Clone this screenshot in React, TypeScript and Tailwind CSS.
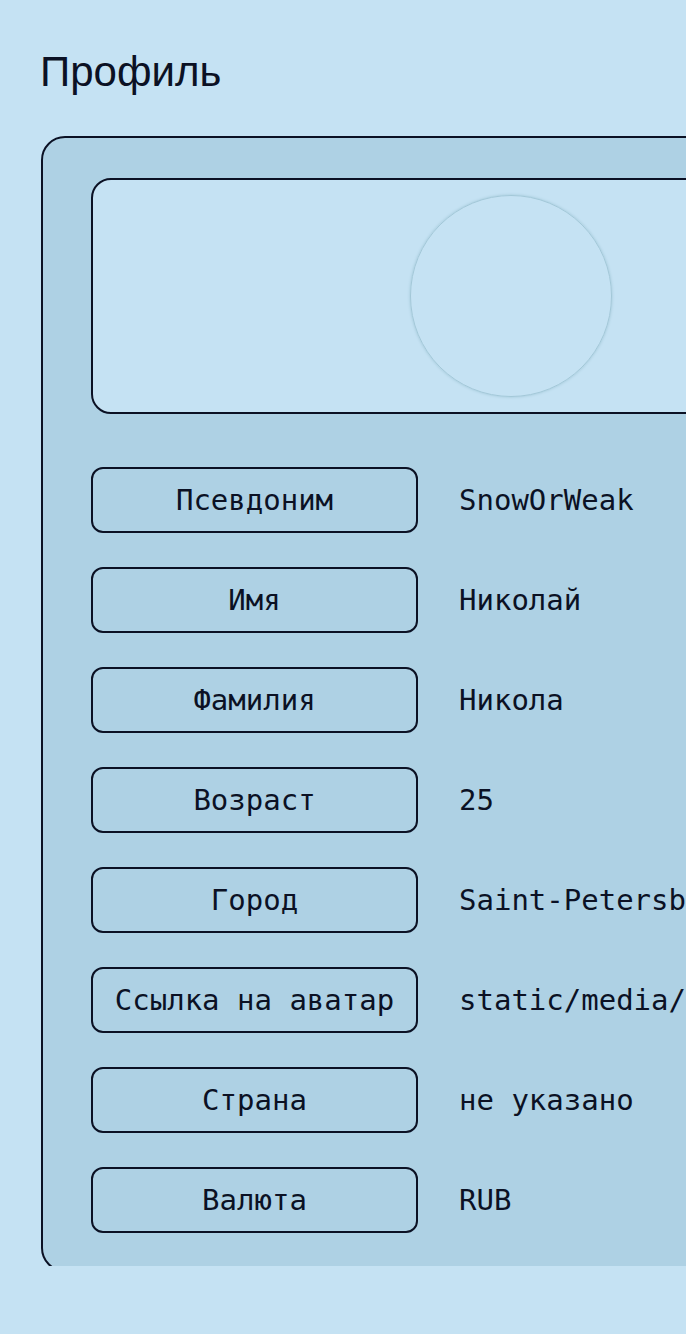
import React from "react";

const rows: [string, string][] = [
  ["Псевдоним", "SnowOrWeak"],
  ["Имя", "Николай"],
  ["Фамилия", "Никола"],
  ["Возраст", "25"],
  ["Город", "Saint-Petersburg"],
  ["Ссылка на аватар", "static/media/avatar.png"],
  ["Страна", "не указано"],
  ["Валюта", "RUB"],
];

export default function App() {
  return (
    <div className="w-[686px] h-[1334px] bg-[#c5e2f3] overflow-hidden text-[#0b1124]">
      <div className="h-[1266px] overflow-hidden">
        <h1 className="pl-[40px] pt-[47px] text-[42px] leading-[50px] font-['Liberation_Sans',sans-serif]">
          Профиль
        </h1>
        <div className="ml-[41px] mt-[39px] w-[940px] h-[1136px] bg-[#aed1e4] border-2 border-[#0b1124] rounded-[24px] pl-[48px] pt-[40px]">
          <div className="w-[840px] h-[236px] bg-[#c5e2f3] border-2 border-[#0b1124] rounded-[20px] flex items-center justify-center">
            <div className="w-[202px] h-[202px] rounded-full border border-[#a3c8d8] shadow-[0_0_3px_#9ec4d4]" />
          </div>
          <div className="mt-[53px] flex flex-col gap-[34px] font-['DejaVu_Sans_Mono',monospace] text-[29px]">
            {rows.map(([label, value]) => (
              <div key={label} className="flex items-center">
                <div className="w-[327px] h-[66px] shrink-0 border-2 border-[#0b1124] rounded-[12px] flex items-center justify-center whitespace-nowrap pt-[2px]">
                  {label}
                </div>
                <div className="ml-[41px] whitespace-nowrap pt-[2px]">{value}</div>
              </div>
            ))}
          </div>
        </div>
      </div>
    </div>
  );
}
